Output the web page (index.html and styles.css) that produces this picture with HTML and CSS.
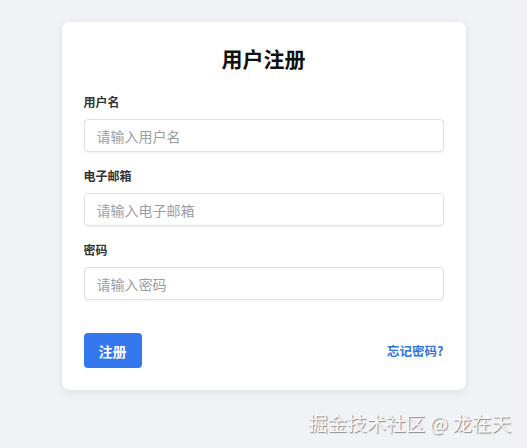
FILE: index.html
```html
<!DOCTYPE html>
<html lang="zh-CN">
<head>
<meta charset="UTF-8">
<meta name="viewport" content="width=device-width, initial-scale=1.0">
<title>用户注册</title>
<link rel="stylesheet" href="styles.css">
</head>
<body>

<div class="card">
<h2>用户注册</h2>

<form class="form">
<label class="label" for="username">用户名</label>
<input class="input" type="text" id="username" placeholder="请输入用户名">

<label class="label" for="email">电子邮箱</label>
<input class="input" type="email" id="email" placeholder="请输入电子邮箱">

<label class="label" for="password">密码</label>
<input class="input" type="password" id="password" placeholder="请输入密码">

<div class="actions">
<button type="submit" class="btn">注册</button>
<a href="#" class="link">忘记密码?</a>
</div>
</form>
</div>

<div class="watermark">掘金技术社区 @ 龙在天</div>

</body>
</html>
```

FILE: styles.css
```css
body{
    font-family: "Noto Sans CJK SC", "Noto Sans", sans-serif;
    margin:0;
    background:#f0f2f5;
    min-height:448px;
    padding-top:22px;
    box-sizing:border-box;
}

.card{
    width:404px;
    margin:0 auto;
    background:#fff;
    padding:22px;
    box-sizing:border-box;
    border-radius:8px;
    box-shadow:0 2px 8px rgba(0,0,0,0.08);
}

h2{
    text-align:center;
    font-size:21px;
    line-height:28px;
    margin:0 0 21px;
    color:#111;
}

.form{
    display:flex;
    flex-direction:column;
}

.label{
    font-size:12px;
    line-height:18px;
    font-weight:bold;
    color:#333;
    margin-bottom:8px;
}

.input{
    height:33px;
    padding:0 12px;
    border:1px solid #dcdfe3;
    border-radius:4px;
    font-size:14px;
    font-family:inherit;
    box-shadow:0 1px 2px rgba(0,0,0,0.06);
    margin-bottom:15px;
    box-sizing:border-box;
}

.input::placeholder{
    color:#9a9ea5;
}

.actions{
    display:flex;
    justify-content:space-between;
    align-items:center;
    margin-top:18px;
}

.btn{
    width:58px;
    height:35px;
    border:none;
    border-radius:4px;
    background:#3478f0;
    color:#fff;
    font-size:14px;
    font-weight:bold;
    font-family:inherit;
    cursor:pointer;
}

.link{
    color:#2f74e0;
    font-size:12.5px;
    font-weight:bold;
    text-decoration:none;
}

.watermark{
    position:absolute;
    right:16px;
    top:410px;
    font-size:19.5px;
    line-height:26px;
    color:#f7f7f7;
    text-shadow:1px 1px 1px #8a8a8a;
}
```
